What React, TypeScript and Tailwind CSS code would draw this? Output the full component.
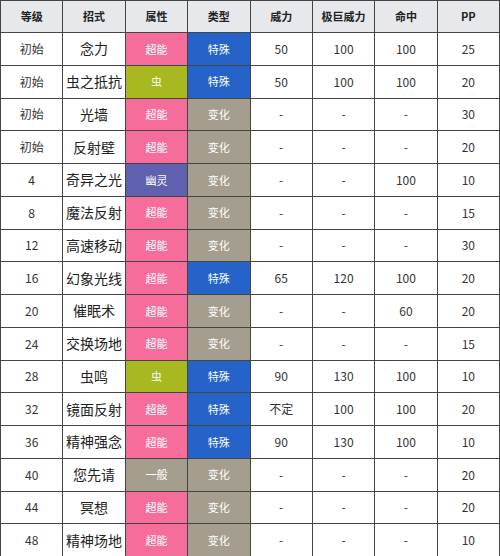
const moves = [
  { lv: '初始', name: '念力', attr: '超能', kind: '特殊', power: '50', max: '100', acc: '100', pp: '25' },
  { lv: '初始', name: '虫之抵抗', attr: '虫', kind: '特殊', power: '50', max: '100', acc: '100', pp: '20' },
  { lv: '初始', name: '光墙', attr: '超能', kind: '变化', power: '-', max: '-', acc: '-', pp: '30' },
  { lv: '初始', name: '反射壁', attr: '超能', kind: '变化', power: '-', max: '-', acc: '-', pp: '20' },
  { lv: '4', name: '奇异之光', attr: '幽灵', kind: '变化', power: '-', max: '-', acc: '100', pp: '10' },
  { lv: '8', name: '魔法反射', attr: '超能', kind: '变化', power: '-', max: '-', acc: '-', pp: '15' },
  { lv: '12', name: '高速移动', attr: '超能', kind: '变化', power: '-', max: '-', acc: '-', pp: '30' },
  { lv: '16', name: '幻象光线', attr: '超能', kind: '特殊', power: '65', max: '120', acc: '100', pp: '20' },
  { lv: '20', name: '催眠术', attr: '超能', kind: '变化', power: '-', max: '-', acc: '60', pp: '20' },
  { lv: '24', name: '交换场地', attr: '超能', kind: '变化', power: '-', max: '-', acc: '-', pp: '15' },
  { lv: '28', name: '虫鸣', attr: '虫', kind: '特殊', power: '90', max: '130', acc: '100', pp: '10' },
  { lv: '32', name: '镜面反射', attr: '超能', kind: '特殊', power: '不定', max: '100', acc: '100', pp: '20' },
  { lv: '36', name: '精神强念', attr: '超能', kind: '特殊', power: '90', max: '130', acc: '100', pp: '10' },
  { lv: '40', name: '您先请', attr: '一般', kind: '变化', power: '-', max: '-', acc: '-', pp: '20' },
  { lv: '44', name: '冥想', attr: '超能', kind: '变化', power: '-', max: '-', acc: '-', pp: '20' },
  { lv: '48', name: '精神场地', attr: '超能', kind: '变化', power: '-', max: '-', acc: '-', pp: '10' },
];

const attrColors: Record<string, string> = {
  超能: 'bg-[#f66d9c]',
  虫: 'bg-[#a8b820]',
  幽灵: 'bg-[#6060b0]',
  一般: 'bg-[#a59e8e]',
};

const kindColors: Record<string, string> = {
  特殊: 'bg-[#2563c9]',
  变化: 'bg-[#a59e8e]',
};

const headers = ['等级', '招式', '属性', '类型', '威力', '极巨威力', '命中', 'PP'];

export default function App() {
  return (
    <div className="w-[500px] h-[556px] bg-white overflow-hidden" style={{ fontFamily: '"Microsoft YaHei", "Noto Sans CJK SC", sans-serif' }}>
      <table className="w-[500px] table-fixed border-collapse text-center text-[#333]">
        <thead>
          <tr className="h-[32px] bg-[#e6e8ec]">
            {headers.map((h) => (
              <th key={h} className="border border-[#444] text-[11px] font-semibold text-[#222]">
                {h}
              </th>
            ))}
          </tr>
        </thead>
        <tbody>
          {moves.map((m, i) => (
            <tr key={i} className="h-[32.75px]">
              <td className="border border-[#444] text-[12px]">{m.lv}</td>
              <td className="border border-[#444] text-[14px] text-[#222]">{m.name}</td>
              <td className={`border border-[#444] text-[11px] text-white ${attrColors[m.attr]}`}>{m.attr}</td>
              <td className={`border border-[#444] text-[11px] text-white ${kindColors[m.kind]}`}>{m.kind}</td>
              <td className="border border-[#444] text-[12px]">{m.power}</td>
              <td className="border border-[#444] text-[12px]">{m.max}</td>
              <td className="border border-[#444] text-[12px]">{m.acc}</td>
              <td className="border border-[#444] text-[12px]">{m.pp}</td>
            </tr>
          ))}
        </tbody>
      </table>
    </div>
  );
}
